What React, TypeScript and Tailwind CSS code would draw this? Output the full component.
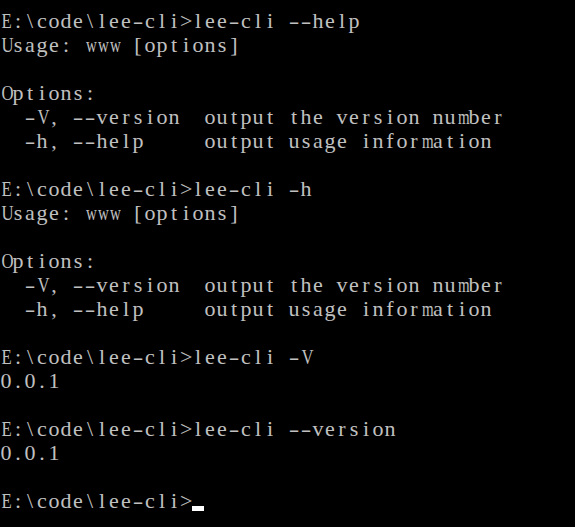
import React from "react";

const lines: string[] = [
  "E:\\code\\lee-cli>lee-cli --help",
  "Usage: www [options]",
  "",
  "Options:",
  "  -V, --version  output the version number",
  "  -h, --help     output usage information",
  "",
  "E:\\code\\lee-cli>lee-cli -h",
  "Usage: www [options]",
  "",
  "Options:",
  "  -V, --version  output the version number",
  "  -h, --help     output usage information",
  "",
  "E:\\code\\lee-cli>lee-cli -V",
  "0.0.1",
  "",
  "E:\\code\\lee-cli>lee-cli --version",
  "0.0.1",
  "",
];

const narrowest = new Set(["m", "w", "M", "W"]);
const wide = new Set(["O", "U", "V", "E", "D", "H", "N", "A"]);

function cls(c: string): string {
  if (narrowest.has(c)) return "inline-block w-[12px] text-center scale-x-[0.68]";
  if (wide.has(c)) return "inline-block w-[12px] text-center scale-x-[0.76]";
  if (c === "-") return "inline-block w-[12px] text-center scale-x-[1.45]";
  return "inline-block w-[12px] text-center";
}

function Cells({ text }: { text: string }) {
  return (
    <>
      {Array.from(text).map((c, i) => (
        <span key={i} className={cls(c)}>
          {c === " " ? "\u00a0" : c}
        </span>
      ))}
    </>
  );
}

export default function App() {
  return (
    <div
      className="w-[575px] h-[527px] bg-black overflow-hidden pt-[9px] text-[#c0c0c0] text-[22px] leading-[24px] whitespace-nowrap"
      style={{ fontFamily: '"Liberation Serif", "Noto Sans CJK SC", serif' }}
    >
      {lines.map((l, i) => (
        <div key={i} className="h-[24px]">
          <Cells text={l} />
        </div>
      ))}
      <div className="h-[24px]">
        <Cells text={"E:\\code\\lee-cli>"} />
        <span className="inline-block w-[12px] h-[5px] bg-white align-[-3px]" />
      </div>
    </div>
  );
}
